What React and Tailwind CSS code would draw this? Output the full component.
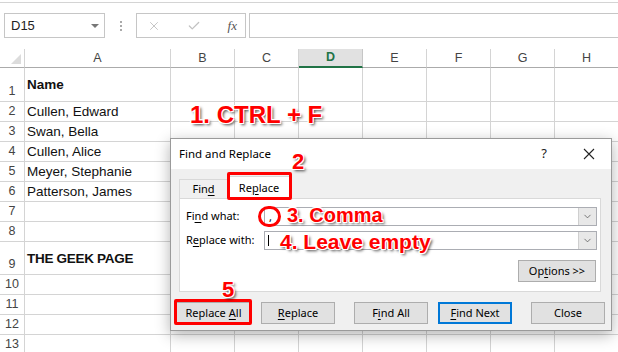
import { X, Check, ChevronDown } from 'lucide-react'

const cols = ['A', 'B', 'C', 'D', 'E', 'F', 'G', 'H']

const rows = [
  { n: 1, h: 'h-[34px]', a: 'Name', bold: true },
  { n: 2, h: 'h-[20px]', a: 'Cullen, Edward' },
  { n: 3, h: 'h-[20px]', a: 'Swan, Bella' },
  { n: 4, h: 'h-[20px]', a: 'Cullen, Alice' },
  { n: 5, h: 'h-[20px]', a: 'Meyer, Stephanie' },
  { n: 6, h: 'h-[20px]', a: 'Patterson, James' },
  { n: 7, h: 'h-[20px]', a: '' },
  { n: 8, h: 'h-[20px]', a: '' },
  { n: 9, h: 'h-[33px]', a: 'THE GEEK PAGE', bold: true },
  { n: 10, h: 'h-[20px]', a: '' },
  { n: 11, h: 'h-[20px]', a: '' },
  { n: 12, h: 'h-[20px]', a: '' },
  { n: 13, h: 'h-[20px]', a: '' },
]

// red callout text with white rim + drop shadow
const callout =
  "absolute leading-none font-bold text-[#ff0000] font-['Liberation_Sans',Arial,sans-serif] [text-shadow:-1px_-1px_0_#fff,1px_-1px_0_#fff,-1px_1px_0_#fff,1px_1px_0_#fff,0_-1.5px_0_#fff,-1.5px_0_0_#fff,2px_2px_3px_rgba(0,0,0,0.75)] whitespace-nowrap"

const btnBase = 'h-[22px] bg-[#e1e1e1] flex items-center justify-center text-[11px] text-black'
const btn = `${btnBase} border border-[#adadad]`

const Combo = ({ children }) => (
  <div className="flex-1 h-[19px] border border-[#abadb3] bg-white flex items-center">
    <div className="flex-1 pl-[3px] flex items-center">{children}</div>
    <div className="w-[18px] h-full bg-[#e8e8e8] border-l border-[#cfcfcf] flex items-center justify-center">
      <ChevronDown className="w-[11px] h-[11px] text-[#505050]" strokeWidth={1.6} />
    </div>
  </div>
)

export default function App() {
  return (
    <div className="relative w-[618px] h-[352px] overflow-hidden bg-white font-['Liberation_Sans',Arial,sans-serif] text-black">
      {/* formula bar */}
      <div className="mt-[2px] h-[47px] border-t border-[#d4d4d4] flex items-start pt-[10px] pl-[4px]">
        <div className="w-[101px] h-[25px] border border-[#c6c6c6] flex items-center justify-between pl-[6px] pr-[5px]">
          <span className="text-[13px] text-[#222]">D15</span>
          <span className="w-0 h-0 border-l-[4px] border-r-[4px] border-t-[4px] border-l-transparent border-r-transparent border-t-[#777]" />
        </div>
        <div className="w-[31px] h-[25px] flex flex-col items-center justify-center gap-[2px]">
          <span className="w-[2px] h-[2px] bg-[#aaa]" />
          <span className="w-[2px] h-[2px] bg-[#aaa]" />
          <span className="w-[2px] h-[2px] bg-[#aaa]" />
        </div>
        <div className="w-[110px] h-[25px] border border-[#c6c6c6] flex items-center pl-[10px] pr-[8px] justify-between">
          <X className="w-[14px] h-[14px] text-[#c2c2c2]" strokeWidth={1.6} />
          <Check className="w-[14px] h-[14px] text-[#c2c2c2]" strokeWidth={2.2} />
          <span className="text-[13px] italic font-['Liberation_Serif',serif] text-[#555] leading-none">fx</span>
        </div>
        <div className="ml-[3px] flex-1 h-[25px] border border-r-0 border-[#c6c6c6]" />
      </div>

      {/* sheet grid */}
      <div className="grid grid-cols-[25px_146px_repeat(7,64px)]">
        <div className="h-[19px] border-r border-b border-[#d4d4d4] border-b-[#ababab] flex items-end justify-end pr-[3px] pb-[3px]">
          <svg width="10" height="10" viewBox="0 0 10 10">
            <path d="M10 0 L10 10 L0 10 Z" fill="#dcdcdc" />
          </svg>
        </div>
        {cols.map((c) =>
          c === 'D' ? (
            <div key={c} className="h-[19px] bg-[#e1e1e1] border-r border-[#c6c6c6] border-b-2 border-b-[#217346] flex items-center justify-center text-[12.5px] font-bold text-[#217346]">
              {c}
            </div>
          ) : (
            <div key={c} className="h-[19px] border-r border-b border-[#d4d4d4] border-b-[#ababab] flex items-center justify-center text-[12.5px] text-[#444]">
              {c}
            </div>
          )
        )}
        {rows.map((r) => (
          <div key={r.n} className="contents">
            <div className={`${r.h} border-r border-b border-[#d4d4d4] flex items-end justify-center pb-[2px] text-[12.5px] leading-[16px] text-[#444]`}>
              {r.n}
            </div>
            <div
              className={`${r.h} border-r border-b border-[#d4d4d4] flex pl-[2px] text-[13.5px] leading-[16px] text-[#111] whitespace-nowrap ${
                r.bold ? 'items-center font-bold' : 'items-end pb-[1px]'
              } ${r.n === 9 ? 'text-[12px] tracking-[-0.3px] pt-[2px]' : ''}`}
            >
              {r.a}
            </div>
            {cols.slice(1).map((c) => (
              <div key={c} className={`${r.h} border-r border-b border-[#d4d4d4]`} />
            ))}
          </div>
        ))}
      </div>

      {/* Find and Replace dialog */}
      <div className="absolute left-[170px] top-[138px] w-[442px] h-[193px] border border-[#9a9a9a] bg-[#f0f0f0] shadow-[0_4px_14px_rgba(0,0,0,0.3)] font-['Noto_Sans',sans-serif] flex flex-col">
        <div className="h-[30px] bg-white flex items-center pl-[8px] pr-[16px]">
          <span className="flex-1 text-[11.5px] text-black">Find and Replace</span>
          <span className="text-[13px] text-[#222] mr-[36px]">?</span>
          <svg width="12" height="12" viewBox="0 0 12 12">
            <path d="M1 1 L11 11 M11 1 L1 11" stroke="#222" strokeWidth="1.1" />
          </svg>
        </div>

        <div className="flex items-end h-[29px] pl-[8px]">
          <div className="w-[49px] h-[19px] border border-b-0 border-[#d9d9d9] flex items-center justify-center text-[11px]">
            Fin<span className="underline underline-offset-2">d</span>
          </div>
          <div className="w-[62px] h-[23px] bg-white border border-b-0 border-[#d9d9d9] flex items-center justify-center text-[11px] -mb-[1px] relative z-10">
            Re<span className="underline underline-offset-2">p</span>lace
          </div>
        </div>

        <div className="mx-[8px] w-[422px] h-[94px] bg-white border border-[#d9d9d9] flex flex-col pt-[8px] pr-[3px]">
          <div className="flex items-center">
            <span className="w-[84px] pl-[6px] text-[11px]">
              Fi<span className="underline underline-offset-2">n</span>d what:
            </span>
            <Combo>
              <span className="text-[11px] leading-none ml-[1px]">,</span>
            </Combo>
          </div>
          <div className="flex items-center mt-[5px]">
            <span className="w-[84px] pl-[6px] text-[11px]">
              R<span className="underline underline-offset-2">e</span>place with:
            </span>
            <Combo>
              <span className="w-[1px] h-[11px] bg-black" />
            </Combo>
          </div>
          <div className="flex justify-end mt-[10px] pr-[1px]">
            <div className={`${btn} w-[78px]`}>
              Op<span className="underline underline-offset-2">t</span>ions &gt;&gt;
            </div>
          </div>
        </div>

        <div className="flex mt-[10px] pl-[5px]">
          <div className={`${btn} w-[75px]`}>
            Replace <span className="underline underline-offset-2 ml-[3px]">A</span>ll
          </div>
          <div className={`${btn} w-[74px] ml-[10px]`}>
            <span className="underline underline-offset-2">R</span>eplace
          </div>
          <div className={`${btn} w-[74px] ml-[19px]`}>
            F<span className="underline underline-offset-2">i</span>nd All
          </div>
          <div className={`${btnBase} w-[74px] ml-[10px] border-2 border-[#0078d7]`}>
            <span className="underline underline-offset-2">F</span>ind Next
          </div>
          <div className={`${btn} w-[74px] ml-[19px]`}>Close</div>
        </div>
      </div>

      {/* annotation boxes */}
      <div className="absolute left-[227px] top-[172px] w-[65px] h-[28px] border-[3px] border-[#ff0000] rounded-[2px] z-20" />
      <div className="absolute left-[174px] top-[299px] w-[78px] h-[26px] border-[3px] border-[#ff0000] rounded-[2px] z-20" />
      <div className="absolute left-[258px] top-[206px] w-[23px] h-[21px] border-[3px] border-[#ff0000] rounded-full z-20" />

      {/* callout labels */}
      <div className={`${callout} left-[190px] top-[103px] text-[24px] z-30`}>1. CTRL + F</div>
      <div className={`${callout} left-[292px] top-[151px] text-[22px] z-30`}>2</div>
      <div className={`${callout} left-[287px] top-[205px] text-[20px] z-30`}>3. Comma</div>
      <div className={`${callout} left-[280px] top-[231px] text-[21px] z-30`}>4. Leave empty</div>
      <div className={`${callout} left-[222px] top-[279px] text-[22px] z-30`}>5</div>
    </div>
  )
}
